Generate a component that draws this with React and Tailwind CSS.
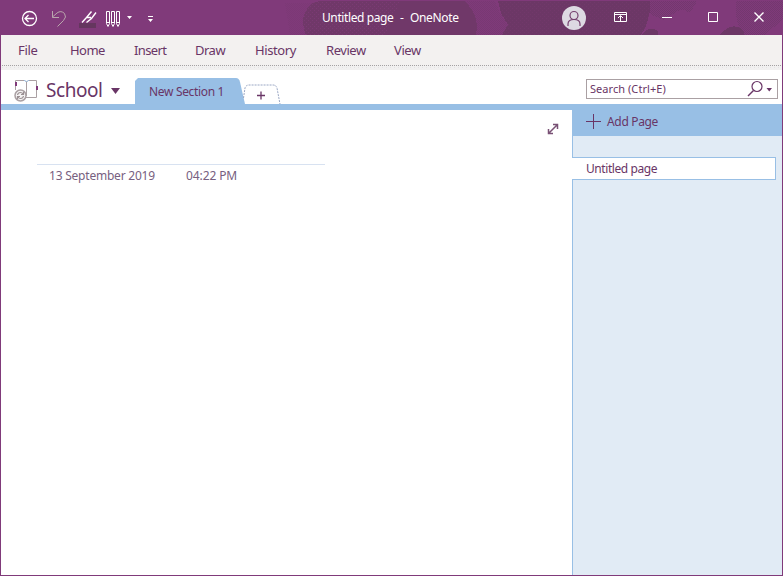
import React from "react";

const MENU = [
  ["File", "w-[52px]", "tracking-[-0.3px]"],
  ["Home", "w-16", "tracking-[-0.55px]"],
  ["Insert", "w-[61px]", "tracking-[-0.6px]"],
  ["Draw", "w-[60px]", "tracking-[-0.5px]"],
  ["History", "w-[71px]", "tracking-[-0.4px]"],
  ["Review", "w-[68px]", "tracking-[-0.45px]"],
  ["View", "w-10", "tracking-[-0.4px]"],
];

function TitleArt() {
  return (
    <svg className="absolute inset-0" width="783" height="35" viewBox="0 0 783 35" shapeRendering="crispEdges">
      <defs>
        <pattern id="dither" width="2" height="2" patternUnits="userSpaceOnUse">
          <path d="M0 0h1v1H0zM1 1h1v1H1z" fill="#6b3768" />
        </pattern>
        <pattern id="dots" width="4" height="4" patternUnits="userSpaceOnUse">
          <path d="M0 0h1v1H0zM2 2h1v1H2z" fill="#803a7a" fillOpacity=".7" />
        </pattern>
      </defs>
      <path d="M285 3H312Q298 16 306 35H290Z" fill="url(#dither)" fillOpacity=".2" />
      <path d="M306 35Q298 16 312 3L320 1H464Q480 14 476 35Z" fill="#703869" />
      <path d="M306 35Q298 16 312 3L320 1H400L385 35Z" fill="url(#dots)" />
      <path d="M464 1Q480 14 476 35H502L508 25L499 11L495 1Z" fill="url(#dither)" fillOpacity=".4" />
      <path d="M498 1L501 13L508 25L502 35H641Q651 20 650 1Z" fill="#6c3766" />
      <path d="M498 1H650Q651 20 641 35H502L508 25Z" fill="url(#dots)" fillOpacity=".4" />
      <path d="M650 1H697L690 13Q682 7 675 13L663 20L650 14Z" fill="url(#dither)" fillOpacity=".65" />
      <path d="M641 35L645 31Q652 27 658 31V35Z" fill="#6c3766" />
      <path d="M720 35Q732 20 744 31V35Z" fill="#6c3766" />
      <path d="M736 1H783V20L764 35H744Q734 24 736 1Z" fill="url(#dither)" fillOpacity=".6" />
      <path d="M0 .5H783" stroke="#803a7a" />
    </svg>
  );
}

function QuickAccess() {
  return (
    <svg className="relative" width="160" height="35" viewBox="0 0 160 35" fill="none" stroke="#fff">
      <circle cx="29.5" cy="18.5" r="7" strokeWidth="1.3" />
      <path d="M25 18.5h9M28.5 15l-3.5 3.5 3.5 3.5" strokeWidth="1.3" />
      <path d="M52.5 11v6.5h6.5M52.5 17L57 13Q61 10 64.500 13.500Q67 17 63.500 20.500L57.500 26.500" stroke="#b9a6ac" />
      <path d="M79 23h17v5h-17z" fill="#65365f" stroke="none" />
      <path d="M91.500 11.500L86.500 17.500L82 22.500M96 12.500L91.500 18.500L86.500 22.500M86.500 17.500h4.500" strokeWidth="1.400" />
      <path d="M106.500 11.500h3v12l-1.500 3-1.500-3zM111.500 11.500h3v12l-1.500 3-1.500-3zM116.500 11.500h3v12l-1.500 3-1.500-3zM106.500 22.500h3M111.500 22.500h3M116.500 22.500h3" />
      <path d="M127 16h5l-2.500 3zM148 19h5l-2.500 3z" fill="#fff" stroke="none" />
      <path d="M148 16.500h5" />
    </svg>
  );
}

function WindowControls() {
  return (
    <svg className="relative" width="233" height="35" viewBox="550 0 233 35" fill="none" stroke="#fff">
      <circle cx="574" cy="18" r="12" fill="#ddd9e2" stroke="none" />
      <circle cx="574" cy="15.500" r="4" stroke="#75406f" strokeWidth="1.2" />
      <path d="M568 26v-2q0-4.500 6-4.500t6 4.500v2" stroke="#75406f" strokeWidth="1.2" />
      <path d="M614.500 12.500h12v9h-12zM614 14.500h13M620.500 21v-5M618 18l2.500-2.500L623 18" />
      <path d="M662 17.500h10M708.500 12.500h9v9h-9z" />
      <path d="M754.500 12.500l9 9M763.500 12.500l-9 9" strokeWidth="1.4" />
    </svg>
  );
}

function Notebook() {
  return (
    <svg width="26" height="24" viewBox="13 79 26 24" fill="none">
      <path d="M15.500 90V80.500H25L26.500 82V96M26.500 82L28 80.500H36.500V97.500H26" stroke="#aaa0a3" />
      <path d="M24 80.500h1l1.500 1.500L28 80.500h1" stroke="#9bc0e5" />
      <path d="M16 82v4M37 86v5" stroke="#803a7a" strokeWidth="2" strokeDasharray="4 1" />
      <circle cx="20.500" cy="95.500" r="5.500" fill="#f4f2f2" stroke="#aaa0a3" strokeWidth="1.500" />
      <path d="M17.500 95q.5-2.500 3-2.500 1.500 0 2.500 1.500M23.500 96q-.5 2.500-3 2.500-1.500 0-2.500-1.500M23.500 92v2.500H21M17.500 99v-2.500H20" stroke="#9b9093" strokeWidth="1.200" />
    </svg>
  );
}

export default function App() {
  return (
    <div className="flex h-[576px] w-[783px] flex-col overflow-hidden bg-white font-['Noto_Sans',sans-serif] text-[12px] text-[#693566]">
      <header className="relative flex h-[35px] shrink-0 justify-between bg-[#803a7a]">
        <TitleArt />
        <QuickAccess />
        <div className="relative ml-[162px] flex flex-1 items-center whitespace-pre pt-px text-white">
          <span className="w-[78px] tracking-[-0.4px]">Untitled page</span>
          <span className="w-[10px]">-</span>
          <span className="tracking-[-0.35px]">OneNote</span>
        </div>
        <WindowControls />
      </header>

      <div className="flex min-h-0 flex-1 flex-col border-x border-b border-[#803a7a]">
        <nav className="flex h-[30px] shrink-0 items-center bg-[#f3f1f0] pl-[17px] pt-[2px] text-[13px]">
          {MENU.map(([name, width, tracking]) => (
            <span key={name} className={`${width} ${tracking} shrink-0`}>{name}</span>
          ))}
        </nav>
        <svg className="shrink-0" width="781" height="5">
          <rect width="781" height="5" fill="#f1f0f0" />
          <path d="M1 .5H781" stroke="#a5a2a3" strokeDasharray="1 1" />
          <path d="M1 2.500H781" stroke="#e6e5e5" strokeDasharray="1 3" />
        </svg>

        <div className="flex h-[34px] shrink-0">
          <div className="flex w-[133px] pl-[12px] pt-[9px]">
            <Notebook />
            <span className="-mt-[2px] ml-[7px] w-[65px] text-[19px] leading-[26px] tracking-[-0.45px]">School</span>
            <svg className="mt-[8px]" width="11" height="8"><path d="M0 1h9l-4.500 6z" fill="#693566" /></svg>
          </div>
          <div className="relative h-[34px] w-[147px]">
            <svg className="absolute inset-0" width="147" height="34" viewBox="134 70 147 34">
              <path d="M135 104V81l3-3h98q3 0 4 4l5 22z" fill="#98bfe5" />
              <path d="M243.500 98L245 88q1-3 4-3h24q3 0 4 3l3 16" fill="none" stroke="#9aa7c4" strokeDasharray="2 1" />
              <path d="M257 95.500h8M261 91.500v8" stroke="#693566" strokeWidth="1.300" />
            </svg>
            <span className="relative block pl-[15px] pt-[13px] leading-[18px] tracking-[-0.33px]">New Section 1</span>
          </div>
          <div className="ml-auto mr-[4px] mt-[9px] flex h-5 w-[192px] items-center border border-[#aaa0a3] bg-white pl-[3px]">
            <span className="text-[11px] tracking-[0.05px]">Search (Ctrl+E)</span>
            <svg className="ml-auto" width="30" height="18" viewBox="747 80 30 18" fill="none">
              <circle cx="757" cy="86.500" r="5" stroke="#693566" strokeWidth="1.200" />
              <path d="M753.500 90.500L748 96" stroke="#693566" strokeWidth="1.500" />
              <path d="M766.500 88h5.500l-2.750 3.500z" fill="#693566" />
            </svg>
          </div>
        </div>
        <div className="h-[6px] shrink-0 bg-[#98bfe5]" />

        <div className="flex min-h-0 flex-1">
          <main className="flex-1">
            <div className="flex h-[54px] justify-end pr-[13px] pt-[13px]">
              <svg width="12" height="12" fill="none" stroke="#795175">
                <path d="M1.500 10.500l9-9M6 1.500h4.500V6M1.500 6v4.500H6" strokeWidth="1.500" />
              </svg>
            </div>
            <div className="ml-[36px] flex h-[21px] w-[288px] items-end border-t border-[#d8e2f1] pl-[12px] text-[12px] leading-[19px] text-[#776080]">
              <span className="w-[137px] tracking-[-0.22px]">13 September 2019</span>
              <span className="tracking-[-0.1px]">04:22 PM</span>
            </div>
          </main>
          <aside className="w-[210px] bg-[#e1ebf5]">
            <div className="flex h-[26px] items-center bg-[#98bfe5] pb-[4px] pl-[14px]">
              <svg width="21" height="16" stroke="#693566"><path d="M0 8.500h15M7.500 1v15" /></svg>
              <span className="pt-px tracking-[-0.33px]">Add Page</span>
            </div>
            <div className="h-[21px] border-l border-[#98bfe5]" />
            <div className="flex h-[23px] w-[204px] items-center border-y border-r border-[#98bfe5] bg-white pl-[14px] tracking-[-0.42px]">Untitled page</div>
            <div className="h-[395px] border-l border-[#98bfe5]" />
          </aside>
        </div>
      </div>
    </div>
  );
}
